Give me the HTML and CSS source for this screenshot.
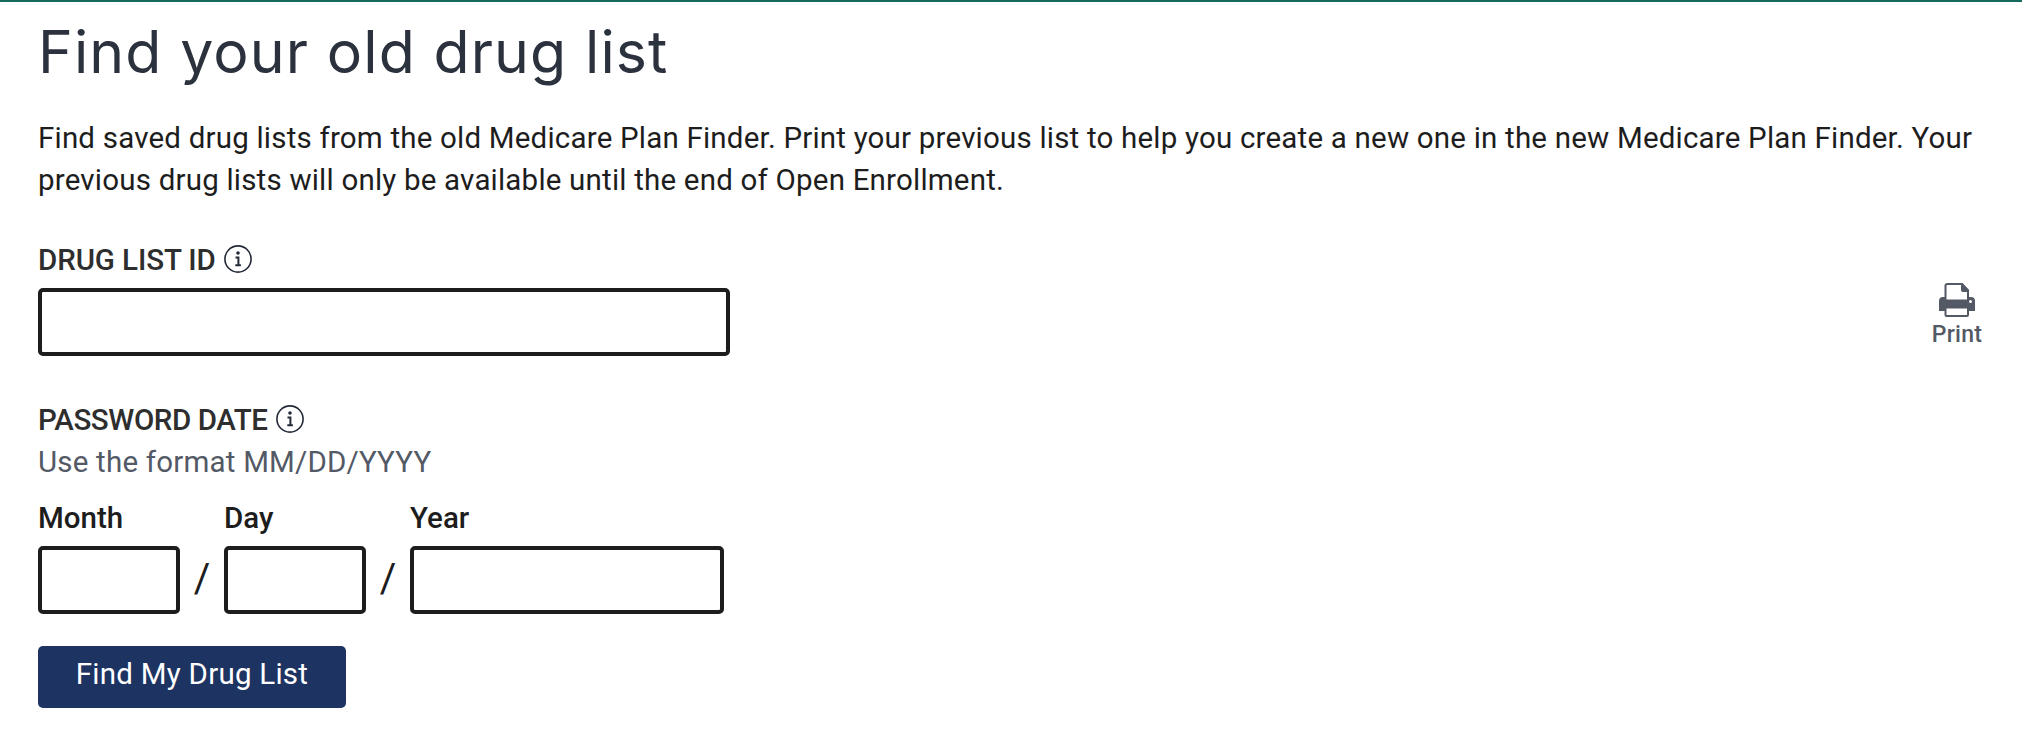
FILE: index.html
```html
<!DOCTYPE html>
<html lang="en">
<head>
  <meta charset="UTF-8" />
  <meta name="viewport" content="width=device-width, initial-scale=1.0"/>
  <title>Find your old drug list</title>
  <link rel="stylesheet" href="styles.css">
</head>
<body>

  <main class="container">
    <h1>Find your old drug list</h1>

    <p class="intro"><span class="intro-first">Find saved drug lists from the old Medicare Plan Finder. Print your previous list to help you create a new one in the new Medicare Plan Finder. Your</span> previous drug lists will only be available until the end of Open Enrollment.</p>

    <div class="content">
      <form class="drug-form">
        <div class="label-row">
          <label class="label label-id" for="listId">DRUG LIST ID</label>
          <svg class="info" viewBox="0 0 28 28">
            <circle cx="14" cy="14" r="13.1" fill="none" stroke="#242a38" stroke-width="1.6"/>
            <circle cx="14" cy="8" r="1.8" fill="#242a38"/>
            <path d="M11.500 12.500h2.900v7.800M11.300 20.300h5.600" fill="none" stroke="#242a38" stroke-width="2"/>
          </svg>
        </div>
        <input type="text" class="field field-id" id="listId">

        <div class="label-row label-row-date">
          <span class="label label-date">PASSWORD DATE</span>
          <svg class="info" viewBox="0 0 28 28">
            <circle cx="14" cy="14" r="13.1" fill="none" stroke="#242a38" stroke-width="1.6"/>
            <circle cx="14" cy="8" r="1.8" fill="#242a38"/>
            <path d="M11.500 12.500h2.900v7.800M11.300 20.300h5.600" fill="none" stroke="#242a38" stroke-width="2"/>
          </svg>
        </div>
        <div class="hint">Use the format MM/DD/YYYY</div>

        <div class="date">
          <div class="date-part">
            <label for="month">Month</label>
            <input type="text" class="field field-short" id="month">
          </div>
          <span class="slash">/</span>
          <div class="date-part">
            <label for="day">Day</label>
            <input type="text" class="field field-short" id="day">
          </div>
          <span class="slash">/</span>
          <div class="date-part">
            <label for="year">Year</label>
            <input type="text" class="field field-year" id="year">
          </div>
        </div>

        <button type="button" class="submit">Find My Drug List</button>
      </form>

      <a class="print">
        <svg class="print-icon" viewBox="0 0 36 34">
          <path d="M6.500 17V3q0-2 2-2h14l6.500 6.500V17" fill="#fff" stroke="#535965" stroke-width="2"/>
          <path d="M22 0h1.500L30 7v2H24q-2 0-2-2z" fill="#535965"/>
          <path d="M0 28V18q0-4 4-4h2v2.500h24V14h2q4 0 4 4v10z" fill="#535965"/>
          <circle cx="31.500" cy="18.500" r="1.500" fill="#fff"/>
          <rect x="6.500" y="24.500" width="22.500" height="8.500" rx="1" fill="#fff" stroke="#535965" stroke-width="2"/>
        </svg>
        <span>Print</span>
      </a>
    </div>
  </main>

</body>
</html>
```

FILE: styles.css
```css
* {
  box-sizing: border-box;
}

body {
  margin: 0;
  font-family: Roboto, sans-serif;
  font-size: 29.5px;
  line-height: 42px;
  letter-spacing: 0.2px;
  background: #fff;
  color: #1d1d1d;
  border-top: 2px solid #146a5d;
}

.container {
  padding: 14px 40px 0 38px;
}

h1 {
  margin: 0;
  font-family: Inter, sans-serif;
  font-size: 59px;
  font-weight: 400;
  line-height: 71px;
  letter-spacing: 1.1px;
  color: #2b323e;
}

.intro {
  margin: 30px 0 0;
}

.intro-first {
  white-space: nowrap;
}

.content {
  display: flex;
  justify-content: space-between;
  align-items: flex-start;
  margin-top: 38px;
}

.drug-form {
  display: flex;
  flex-direction: column;
  align-items: flex-start;
}

.label-row {
  display: flex;
  align-items: center;
  gap: 8px;
  height: 42px;
}

.label-row-date {
  margin-top: 43px;
}

.label {
  font-weight: 500;
  color: #2e2e2e;
}

.label-id {
  letter-spacing: -0.1px;
}

.label-date {
  letter-spacing: -0.4px;
}

.info {
  width: 28px;
  height: 28px;
  margin-top: -2px;
}

.field {
  display: block;
  height: 68px;
  border: 4px solid #1d1d1d;
  border-radius: 5px;
  background: #fff;
  padding: 0 12px;
  font: inherit;
  outline: none;
}

.field-id {
  width: 692px;
  margin-top: 7px;
}

.hint {
  color: #535965;
}

.date {
  display: flex;
  align-items: flex-end;
  margin-top: 14px;
}

.date-part label {
  display: block;
  font-weight: 500;
  letter-spacing: 0;
  margin-bottom: 7px;
}

.field-short {
  width: 142px;
}

.field-year {
  width: 314px;
}

.slash {
  width: 44px;
  height: 68px;
  text-align: center;
  font-size: 40px;
  line-height: 66px;
}

.submit {
  width: 308px;
  height: 62px;
  margin-top: 32px;
  padding: 0 0 6px;
  border: none;
  border-radius: 5px;
  background: #1d3463;
  color: #fff;
  font: inherit;
  letter-spacing: 0.25px;
  cursor: pointer;
}

.print {
  display: flex;
  flex-direction: column;
  align-items: center;
  margin-top: 44px;
  color: #535965;
  font-size: 23px;
  font-weight: 500;
  line-height: 28px;
}

.print-icon {
  width: 36px;
  height: 34px;
  margin-bottom: 4px;
}
```
